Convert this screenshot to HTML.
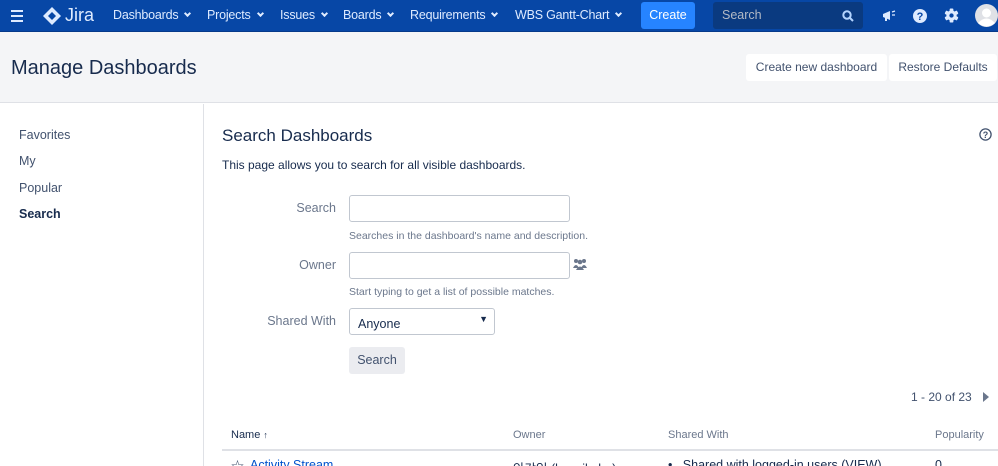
<!DOCTYPE html>
<html><head><meta charset="utf-8"><style>
*{box-sizing:border-box;margin:0;padding:0}
html,body{width:998px;height:466px;overflow:hidden}
body{font-family:"Liberation Sans","Noto Sans CJK KR",sans-serif;background:#fff;position:relative;color:#172b4d}
.a{position:absolute;white-space:nowrap}
.nav{position:absolute;left:0;top:0;width:998px;height:32px;background:#0747a6;border-bottom:1px solid #063a8a}
.nav .i{position:absolute;top:8px;color:#deebff;font-size:12.5px;letter-spacing:-0.2px}
.car{display:inline-block;width:5px;height:5px;border-right:2px solid #deebff;border-bottom:2px solid #deebff;transform:rotate(45deg);margin-left:7px;position:relative;top:-3px}
.ph{position:absolute;left:0;top:32px;width:998px;height:71px;background:#f4f5f7;border-bottom:1px solid #dfe1e6}
.btn{position:absolute;background:#fff;border-radius:3px;font-size:12px;color:#42526e;height:27px;line-height:27px;text-align:center}
.side{position:absolute;left:0;top:104px;width:204px;height:362px;border-right:1px solid #dfe1e6}
.side div{position:absolute;left:19px;font-size:12.5px;color:#42526e}
.lbl{font-size:12.5px;color:#6b778c;text-align:right;width:116px;left:220px}
.inp{position:absolute;left:349px;width:221px;height:27px;border:1px solid #c1c7d0;border-radius:3px;background:#fff}
.help{font-size:10.5px;color:#6b778c;left:349px}
.th{font-size:11px;color:#6b778c;top:429px}
</style></head><body>
<div class="nav">
 <div class="a" style="left:11px;top:10px;width:12px"><div style="height:2px;background:#deebff;margin-bottom:3px"></div><div style="height:2px;background:#deebff;margin-bottom:3px"></div><div style="height:2px;background:#deebff"></div></div>
 <svg class="a" style="left:42px;top:6px" width="20" height="20" viewBox="0 0 20 20"><path d="M10 1 L19 10 L10 19 L1 10Z" fill="#deebff"/><path d="M10 6 L14 10 L10 14 L6 10Z" fill="#0747a6"/></svg>
 <div class="a" style="left:65px;top:5px;color:#deebff;font-size:18px">Jira</div>
 <div class="i a" style="left:113px">Dashboards<span class="car"></span></div>
 <div class="i a" style="left:207px">Projects<span class="car"></span></div>
 <div class="i a" style="left:280px">Issues<span class="car"></span></div>
 <div class="i a" style="left:343px">Boards<span class="car"></span></div>
 <div class="i a" style="left:410px">Requirements<span class="car"></span></div>
 <div class="i a" style="left:515px">WBS Gantt-Chart<span class="car"></span></div>
 <div class="a" style="left:641px;top:2px;width:54px;height:27px;background:#2684ff;border-radius:3px;color:#fff;font-size:12.5px;text-align:center;line-height:27px">Create</div>
 <div class="a" style="left:713px;top:2px;width:150px;height:27px;background:#0a3a80;border-radius:3px;color:#b3bac5;font-size:12.5px;line-height:27px;padding-left:9px">Search</div>
 <svg class="a" style="left:842px;top:10px" width="12" height="12"><circle cx="5" cy="5" r="3.7" stroke="#b3d4ff" stroke-width="2" fill="none"/><path d="M8 8 L11 11" stroke="#b3d4ff" stroke-width="2"/></svg>
 <svg class="a" style="left:881px;top:8px" width="16" height="16"><path d="M2 6 L9 3 L9 12 L2 9Z" fill="#deebff"/><rect x="4" y="9" width="2" height="4" fill="#deebff"/><path d="M11 4 L14 3 M11 7 L14 7" stroke="#deebff" stroke-width="1.3"/></svg>
 <svg class="a" style="left:912px;top:8px" width="16" height="16"><circle cx="8" cy="8" r="7" fill="#deebff"/><text x="8" y="12" font-size="11" font-weight="bold" text-anchor="middle" fill="#0747a6" font-family="Liberation Sans">?</text></svg>
 <svg class="a" style="left:944px;top:8px" width="15" height="15" viewBox="0 0 16 16"><g fill="#deebff"><rect x="6" y="0.5" width="4" height="15" rx="1"/><rect x="6" y="0.5" width="4" height="15" rx="1" transform="rotate(60 8 8)"/><rect x="6" y="0.5" width="4" height="15" rx="1" transform="rotate(120 8 8)"/><circle cx="8" cy="8" r="5.5"/></g><circle cx="8" cy="8" r="2.3" fill="#0747a6"/></svg>
 <svg class="a" style="left:975px;top:4px" width="23" height="23"><circle cx="11.5" cy="11.5" r="11.5" fill="#dfe1e6"/><circle cx="11.5" cy="9" r="4.5" fill="#fff"/><path d="M3 19 Q11.5 10 20 19 Q11.5 26 3 19Z" fill="#fff"/></svg>
</div>
<div class="ph">
 <div class="a" style="left:11px;top:25px;font-size:20px;color:#172b4d">Manage Dashboards</div>
 <div class="btn" style="left:746px;top:22px;width:141px">Create new dashboard</div>
 <div class="btn" style="left:889px;top:22px;width:108px">Restore Defaults</div>
</div>
<div class="side">
 <div style="top:24px">Favorites</div>
 <div style="top:50px">My</div>
 <div style="top:77px">Popular</div>
 <div style="top:103px;font-weight:bold;color:#172b4d">Search</div>
</div>
<div class="a" style="left:222px;top:126px;font-size:17px">Search Dashboards</div>
<svg class="a" style="left:979px;top:128px" width="13" height="13"><circle cx="6.5" cy="6.5" r="5.6" fill="none" stroke="#42526e" stroke-width="1.3"/><text x="6.5" y="10" font-size="9" text-anchor="middle" fill="#42526e" font-family="Liberation Sans" font-weight="bold">?</text></svg>
<div class="a" style="left:222px;top:158px;font-size:12px;color:#172b4d">This page allows you to search for all visible dashboards.</div>
<div class="a lbl" style="top:201px">Search</div>
<div class="inp" style="top:195px"></div>
<div class="a help" style="top:230px">Searches in the dashboard's name and description.</div>
<div class="a lbl" style="top:258px">Owner</div>
<div class="inp" style="top:252px"></div>
<svg class="a" style="left:573px;top:258px" width="14" height="12"><circle cx="3" cy="3" r="2" fill="#6b778c"/><circle cx="11" cy="3" r="2" fill="#6b778c"/><circle cx="7" cy="4" r="2.3" fill="#6b778c"/><path d="M0 10 Q3 4 6 10Z M8 10 Q11 4 14 10Z M3 12 Q7 5 11 12Z" fill="#6b778c"/></svg>
<div class="a help" style="top:286px">Start typing to get a list of possible matches.</div>
<div class="a lbl" style="top:314px">Shared With</div>
<div class="a" style="left:349px;top:308px;width:146px;height:27px;border:1px solid #c1c7d0;border-radius:3px;font-size:12.5px;padding:8px 0 0 8px;color:#172b4d">Anyone<span style="position:absolute;right:6px;top:5px;font-size:9px">▼</span></div>
<div class="a" style="left:349px;top:347px;width:56px;height:27px;background:#ebecf0;border-radius:3px;font-size:12.5px;color:#42526e;text-align:center;line-height:27px">Search</div>
<div class="a" style="left:911px;top:390px;font-size:12px;color:#42526e">1 - 20 of 23</div>
<svg class="a" style="left:982px;top:392px" width="8" height="10"><path d="M1 0 L7 5 L1 10Z" fill="#6b778c"/></svg>
<div class="a th" style="left:231px;color:#172b4d">Name <span style="font-size:9px">↑</span></div>
<div class="a th" style="left:513px">Owner</div>
<div class="a th" style="left:668px">Shared With</div>
<div class="a th" style="left:935px">Popularity</div>
<div class="a" style="left:222px;top:449px;width:776px;height:2px;background:#dfe1e6"></div>
<div class="a" style="left:231px;top:456px;font-size:13px;color:#42526e">☆</div>
<div class="a" style="left:250px;top:458px;font-size:12.5px;color:#0052cc">Activity Stream</div>
<div class="a" style="left:513px;top:458px;font-size:12.5px">안강일 (kangil.ahn)</div>
<div class="a" style="left:668px;top:458px;font-size:12.5px">•&nbsp;&nbsp; Shared with logged-in users (VIEW)</div>
<div class="a" style="left:935px;top:458px;font-size:12.5px">0</div>
</body></html>
